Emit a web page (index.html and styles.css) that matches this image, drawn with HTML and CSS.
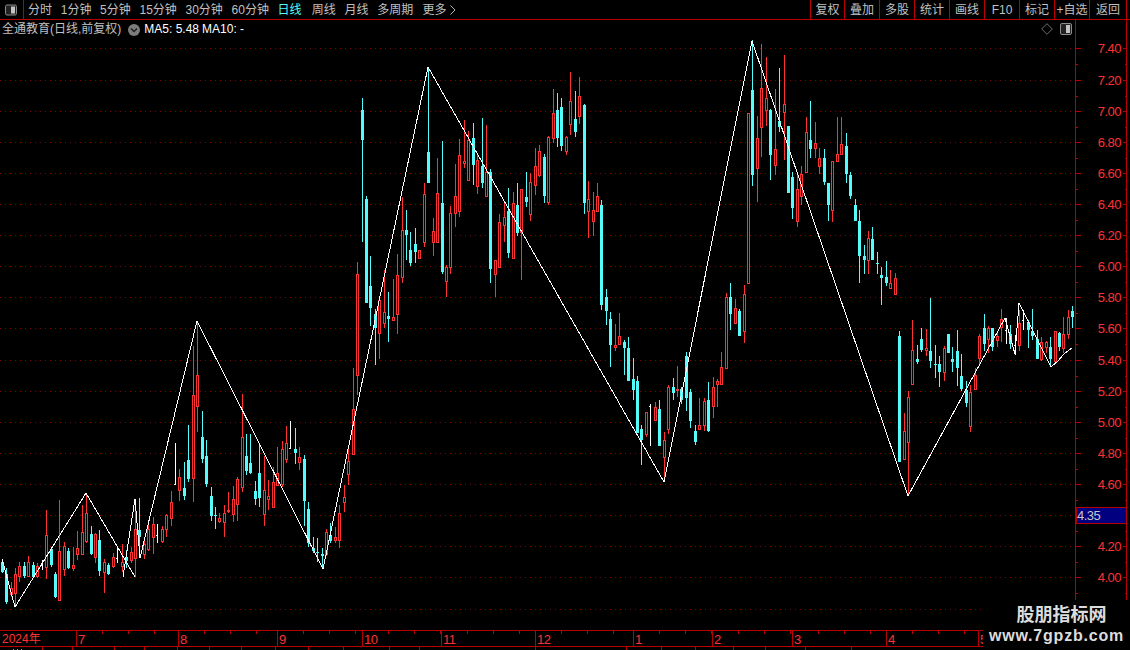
FILE: index.html
```html
<!DOCTYPE html>
<html lang="zh-CN">
<head>
<meta charset="utf-8">
<title>全通教育 日线</title>
<link rel="stylesheet" href="styles.css">
</head>
<body>
<div class="app">
  <header class="toolbar">
    <div class="layout-cell">
      <svg class="icon-12" viewBox="0 0 12 12"><rect x="0.5" y="1" width="11" height="10" rx="1.5" fill="#222" stroke="#8c8c8c"/><rect x="6" y="2.5" width="4" height="7" fill="#c4c4c4"/></svg>
    </div>
    <nav class="tabs">
      <span>分时</span><span>1分钟</span><span>5分钟</span><span>15分钟</span><span>30分钟</span><span>60分钟</span>
      <span class="active">日线</span><span>周线</span><span>月线</span><span>多周期</span>
      <span class="more">更多<svg class="chev" viewBox="0 0 6 10"><path d="M0.5 0.5 L5 5 L0.5 9.5" fill="none" stroke="#b4b4b4"/></svg></span>
    </nav>
    <div class="actions">
      <span>复权</span><span>叠加</span><span>多股</span><span>统计</span><span>画线</span><span>F10</span><span>标记</span><span>+自选</span><span>返回</span>
    </div>
  </header>

  <main class="chart">
    <svg id="plot" class="plot" viewBox="0 20 1130 610" width="1130" height="610"></svg>
    <div class="legend">
      <div class="legend-info">
        <span class="stock">全通教育(日线,前复权)</span>
        <svg class="dropdown" viewBox="0 0 12 12"><circle cx="6" cy="6" r="6" fill="#7c7c7c"/><path d="M3 4.5 L6 7.5 L9 4.5" fill="none" stroke="#1c1c1c" stroke-width="1.4"/></svg>
        <span class="ma">MA5: 5.48</span>
        <span class="ma">MA10: -</span>
      </div>
      <div class="legend-tools">
        <svg class="icon-12" viewBox="0 0 12 12"><path d="M6 0.7 L11.3 6 L6 11.3 L0.7 6 Z" fill="none" stroke="#6e6e6e"/></svg>
        <svg class="icon-12" viewBox="0 0 12 12"><rect x="0.5" y="0.5" width="11" height="11" rx="1.5" fill="#222" stroke="#8c8c8c"/><rect x="6" y="2" width="4" height="8" fill="#c4c4c4"/></svg>
      </div>
    </div>
  </main>

  <div class="dates">
    <span>2024年</span><span>7</span><span>8</span><span>9</span><span>10</span><span>11</span><span>12</span><span>1</span><span>2</span><span>3</span><span>4</span><span>5</span>
  </div>
  <div class="strip">
    <i class="first"></i><i></i><i></i><i></i><i></i><i></i><i></i><i></i><i></i><i></i><i></i><i></i><i></i><i></i><i></i><i></i><i></i><i></i><i></i><i></i><i></i>
  </div>

  <aside class="watermark">
    <div class="wm-title">股朋指标网</div>
    <div class="wm-url">www.7gpzb.com</div>
  </aside>
</div>
<script src="chart.js"></script>
</body>
</html>
```
FILE: styles.css
```css
* { box-sizing: border-box; }
html, body { margin: 0; padding: 0; background: #000; }
body {
  width: 1130px;
  height: 650px;
  overflow: hidden;
  font: 12px/1 "Liberation Sans", "Noto Sans CJK SC", sans-serif;
  color: #c0c0c0;
}
.app { position: relative; display: flex; flex-direction: column; width: 1130px; height: 650px; overflow: hidden; }

.toolbar { display: flex; align-items: stretch; flex: 0 0 20px; height: 20px; border-bottom: 1px solid #b80000; }
.layout-cell { display: flex; align-items: center; justify-content: center; width: 24px; padding-right: 1px; border-right: 1px solid #b80000; }
.icon-12 { display: block; width: 12px; height: 12px; }
.tabs { display: flex; align-items: center; gap: 8.7px; padding-left: 4px; }
.tabs span { display: block; white-space: nowrap; }
.tabs .active { color: #54fcfc; margin-right: 1.5px; }
.tabs .more { display: flex; align-items: center; gap: 4px; margin-left: 0.5px; }
.chev { display: block; width: 6px; height: 10px; }
.actions { display: flex; margin-left: auto; padding-right: 3px; }
.actions span { display: flex; align-items: center; justify-content: center; width: 35px; border-left: 1px solid #b80000; white-space: nowrap; }
.actions span:first-child { width: 34px; }
.actions span:last-child { width: 38px; border-right: 1px solid #b80000; }

.chart { position: relative; flex: 0 0 610px; height: 610px; }
.plot { display: block; }
.plot text { font: 13px "Liberation Sans", sans-serif; letter-spacing: -0.5px; fill: #ff3232; }
.plot .tag { fill: #c8c8c8; }
.legend { position: absolute; left: 0; top: 0; width: 1075px; height: 18px; padding: 0 3px 0 2px; display: flex; align-items: center; justify-content: space-between; }
.legend-info { display: flex; align-items: center; }
.stock { white-space: nowrap; }
.dropdown { display: block; width: 12px; height: 12px; margin: 1px 4px 0 7px; }
.ma { color: #fff; margin-right: 3px; white-space: nowrap; }
.legend-tools { display: flex; gap: 7px; align-items: center; }

.dates {
  display: grid;
  grid-template-columns: 76px 102px 99px 85px 79px 94px 98px 79px 80px 94px 94px 1fr;
  flex: 0 0 17px;
  height: 17px;
  border-top: 1px solid #b80000;
  border-bottom: 1px solid #b80000;
  color: #ff3232;
  font-size: 13px;
  letter-spacing: -0.5px;
}
.dates span {
  padding: 2px 0 0 1px;
  border-left: 1px solid #b80000;
  line-height: 13px;
  background: repeating-linear-gradient(90deg, transparent 0 25px, #b80000 25px 26px) top / 100% 3px no-repeat;
}
.dates span:first-child { border-left: 0; background: none; padding-left: 2px; font-size: 12px; letter-spacing: 0; }
.dates span:last-child { margin-left: -2px; }

.strip {
  display: grid;
  grid-template-columns: 43px 30px 42px 30px 33px 32px 32px 34px 33px 35px 46px 30px 116px 91px 35px 34px 38px 32px 40px 46px 1fr;
  flex: 0 0 3px;
  height: 3px;
  overflow: hidden;
}
.strip i { display: block; height: 3px; border-right: 1px solid #b80000; }
.strip .first { background: repeating-linear-gradient(90deg, transparent 0 3px, #9a9a9a 3px 4px) 10px 2px / 14px 1px no-repeat; }

.watermark { position: absolute; right: 0; bottom: 0; width: 147px; height: 50px; padding-top: 5px; background: #000; text-align: center; color: #dcdcdc; font-weight: bold; }
.wm-title { font-size: 18px; line-height: 20px; padding-left: 10px; }
.wm-url { margin-top: 1px; font-size: 16px; line-height: 20px; letter-spacing: 0.8px; white-space: nowrap; }
```
FILE: chart.js
```js
// Candles: [high, low, bodyTop, bodyBottom, kind]  r = rising (hollow red), c = falling (cyan), w = flat (white)
// The first group was read in 3x units from y = 320.
var early = [
[718,760,726,755,'c'],[745,851,762,846,'c'],[785,830,805,825,'r'],[745,860,763,823,'r'],[725,785,737,772,'r'],[727,775,738,768,'c'],[708,770,727,770,'r'],[725,772,735,770,'c'],[730,775,738,772,'r'],[720,750,735,735,'w'],
[570,776,645,745,'r'],[680,740,687,735,'c'],[757,835,762,830,'c'],[540,842,694,842,'r'],[667,767,679,749,'r'],[683,745,693,743,'c'],[680,752,736,747,'r'],[633,720,685,704,'r'],[555,705,637,704,'r'],[520,670,580,666,'r'],
[618,705,642,702,'c'],[640,728,642,713,'r'],[630,767,660,752,'c'],[718,818,727,758,'r'],[730,765,735,762,'c'],[700,742,712,740,'r'],[682,730,715,715,'w'],[672,755,725,740,'r'],[690,745,712,722,'c'],[680,728,697,722,'r'],
[565,770,628,716,'r'],[533,710,630,652,'c'],[655,717,673,705,'r'],[600,693,628,690,'r'],[590,703,613,653,'r'],[613,668,645,645,'w'],[617,667,627,666,'r'],[583,650,586,631,'r'],[513,617,547,596,'r'],[370,495,493,493,'w'],
[447,543,472,512,'r'],[427,540,505,527,'c'],[316,485,420,477,'c'],[78,545,226,478,'r'],[3,335,166,262,'r'],[273,428,351,417,'c'],[360,500,408,492,'c'],[502,602,528,587,'c'],[560,626,586,587,'c'],[580,610,595,605,'r'],
[556,650,580,610,'r'],[517,578,571,577,'r'],[497,607,538,586,'r'],[472,603,478,554,'r'],[222,516,351,505,'r'],[342,465,408,452,'c'],[343,462,430,458,'c'],[484,556,514,536,'c'],[375,560,460,533,'c'],[407,617,511,586,'r'],
[480,570,529,539,'r'],[440,563,487,563,'r'],[381,497,460,497,'r'],[363,500,388,495,'r'],[318,430,370,420,'r'],[303,387,385,385,'w'],[325,433,388,399,'c'],[381,450,412,428,'r'],[405,618,418,543,'c'],[545,680,568,670,'c'],
[650,700,684,692,'c'],[655,725,697,700,'c'],[685,745,703,708,'c'],[627,708,637,705,'r'],[610,670,645,664,'c'],[620,668,652,662,'r'],[555,683,580,662,'r'],[495,575,530,548,'r'],[380,495,422,465,'r']
].map(function (c) { return [320 + c[0] / 3, 320 + c[1] / 3, 320 + c[2] / 3, 320 + c[3] / 3, c[4]]; });

var later = [
[368,455,409,455,'r'],[262,395,274,376,'r'],[98,242,110,140,'c'],[196,303,199,303,'c'],[256,326,286,308,'c'],[309,365,314,328,'c'],[300,359,300,334,'r'],[270,328,312,324,'r'],[292,342,316,319,'c'],[279,321,317,321,'r'],
[254,334,275,315,'r'],[197,283,230,278,'r'],[210,260,230,235,'c'],[232,266,250,263,'c'],[228,263,244,252,'c'],[250,259,250,259,'r'],[183,247,194,243,'r'],[67,183,152,183,'c'],[218,256,231,243,'r'],[158,243,193,243,'r'],
[141,274,203,272,'c'],[265,297,267,282,'r'],[206,274,213,268,'r'],[164,227,196,214,'r'],[139,217,155,212,'r'],[120,168,161,164,'r'],[131,181,140,181,'r'],[123,185,138,165,'c'],[155,194,160,187,'r'],[118,188,166,183,'c'],
[125,197,172,197,'r'],[169,283,172,269,'c'],[260,297,260,275,'r'],[214,268,222,268,'r'],[203,242,217,226,'r'],[188,258,211,253,'c'],[192,259,203,259,'r'],[183,236,205,233,'c'],[189,280,189,233,'r'],[172,207,197,202,'c'],
[173,221,182,215,'r'],[148,195,166,186,'r'],[145,177,151,176,'r'],[154,203,157,196,'c'],[136,205,137,203,'r'],[89,143,113,139,'r'],[93,147,110,138,'c'],[98,151,107,146,'c'],[136,155,137,152,'r'],[72,135,101,125,'r'],
[91,137,119,132,'c'],[77,124,96,117,'r'],[104,214,105,203,'c'],[181,238,199,212,'r'],[192,236,210,222,'r'],[183,212,196,212,'r'],[200,310,205,305,'c'],[289,325,297,311,'c'],[312,367,319,345,'c'],[324,351,345,348,'r'],
[313,345,336,345,'r'],[340,375,342,348,'c'],[337,381,348,381,'c'],[358,400,379,390,'c'],[376,433,381,433,'c'],[425,465,429,440,'c'],[412,437,412,435,'r'],[404,446,406,406,'w'],[402,421,407,421,'r'],[400,446,409,446,'c'],
[432,480,440,458,'r'],[385,434,387,430,'r'],[378,400,387,393,'c'],[366,397,389,391,'r'],[387,404,389,400,'c'],[352,411,356,398,'c'],[389,428,392,421,'c'],[425,445,431,442,'c'],[398,430,425,430,'r'],[398,431,401,426,'r'],
[382,432,400,431,'c'],[377,418,387,407,'r'],[379,407,381,385,'r'],[352,385,367,385,'r'],[293,369,297,369,'r'],[283,330,297,314,'c'],[299,324,308,324,'r'],[309,336,311,336,'c'],[285,343,294,332,'r'],[113,284,113,284,'r'],
[40,186,90,175,'c'],[116,202,138,169,'r'],[44,157,88,128,'r'],[57,126,98,111,'r'],[109,180,110,155,'c'],[89,175,149,166,'r'],[68,132,121,127,'c'],[55,160,104,113,'r'],[126,193,126,193,'c'],[172,219,177,208,'c'],
[175,227,189,222,'r'],[166,205,174,197,'r'],[117,173,132,173,'r'],[101,158,140,149,'c'],[122,158,143,149,'r'],[148,174,158,167,'r'],[149,185,158,182,'c'],[183,221,183,205,'c'],[161,222,161,211,'r'],[117,162,154,162,'r'],
[117,155,144,155,'r'],[133,183,146,174,'c'],[172,199,175,196,'c'],[199,221,205,221,'c'],[210,283,221,256,'c'],[245,274,256,260,'c'],[231,274,238,261,'r'],[227,260,239,260,'c'],[252,274,263,264,'c'],[267,305,275,278,'c'],
[261,286,277,283,'c'],[270,289,283,289,'r'],[273,295,278,295,'r'],[331,462,336,462,'c'],[413,460,431,460,'r'],[391,495,397,443,'r'],[320,385,350,385,'r'],[345,364,359,362,'c'],[328,352,339,350,'c'],[329,356,348,351,'r'],
[298,368,351,361,'c'],[345,378,364,365,'c'],[356,387,364,372,'c'],[346,381,348,373,'r'],[334,353,334,353,'c'],[347,372,359,362,'c'],[330,386,351,368,'c'],[354,391,376,389,'c'],[381,407,390,403,'c'],[385,432,392,427,'r'],
[368,390,375,390,'r'],[334,364,336,359,'r'],[314,351,328,344,'c'],[326,353,328,340,'r'],[328,351,328,347,'c'],[333,347,336,341,'r'],[309,342,319,328,'r'],[318,344,330,330,'w'],[325,349,334,344,'c'],[335,355,345,345,'w'],
[310,351,323,346,'r'],[310,330,320,320,'w'],[320,348,322,330,'c'],[309,340,331,336,'c'],[330,359,339,359,'c'],[337,361,342,360,'r'],[341,353,342,348,'r'],[337,367,347,359,'c'],[331,362,331,362,'r'],[332,351,333,347,'c'],
[317,353,334,349,'r'],[310,339,317,335,'r'],[306,328,311,317,'c']
];

var candles = early.concat(later);
var NS = 'http://www.w3.org/2000/svg';
var svg = document.getElementById('plot');
var RED = '#ff3232', CYAN = '#54fcfc', LINE = '#b80000';

function el(name, attrs, text) {
  var n = document.createElementNS(NS, name);
  for (var k in attrs) n.setAttribute(k, attrs[k]);
  if (text) n.textContent = text;
  svg.appendChild(n);
  return n;
}
function vline(x, y1, y2, color) {
  el('rect', { x: x, y: Math.round(y1), width: 1, height: Math.max(1, Math.round(y2) - Math.round(y1)), fill: color, 'shape-rendering': 'crispEdges' });
}

// Grid and price axis
var prices = ['7.40','7.20','7.00','6.80','6.60','6.40','6.20','6.00','5.80','5.60','5.40','5.20','5.00','4.80','4.60','','4.20','4.00'];
var ys = [];
for (var n = 0; n < 19; n++) ys.push(Math.round(48.4 + n * 31.12));
ys.forEach(function (y, i) {
  el('line', { x1: 0, x2: 1075, y1: y + 0.5, y2: y + 0.5, stroke: '#8a0000', 'stroke-dasharray': '1 4', 'shape-rendering': 'crispEdges' });
  el('rect', { x: 1075, y: y, width: 6, height: 1, fill: LINE, 'shape-rendering': 'crispEdges' });
  el('rect', { x: 1123, y: y, width: 4, height: 1, fill: LINE, 'shape-rendering': 'crispEdges' });
  el('rect', { x: 1075, y: y + 16, width: 3, height: 1, fill: LINE, 'shape-rendering': 'crispEdges' });
  el('rect', { x: 1125, y: y + 16, width: 2, height: 1, fill: LINE, 'shape-rendering': 'crispEdges' });
  if (prices[i]) el('text', { x: 1121, y: y + 4.5, 'text-anchor': 'end' }, prices[i]);
});
el('rect', { x: 1075, y: 20, width: 1, height: 610, fill: LINE, 'shape-rendering': 'crispEdges' });
el('rect', { x: 1126, y: 20, width: 1, height: 610, fill: LINE, 'shape-rendering': 'crispEdges' });

// Candles
candles.forEach(function (c, i) {
  var x = Math.floor(2.2 + i * 4.4426);
  var hi = c[0], lo = c[1], top = Math.round(c[2]), bot = Math.round(c[3]), k = c[4];
  var color = k === 'r' ? RED : k === 'c' ? CYAN : '#ffffff';
  if (k === 'w') {
    vline(x, hi, lo, color);
    el('rect', { x: x - 1, y: top, width: 2, height: 1, fill: color, 'shape-rendering': 'crispEdges' });
    return;
  }
  if (hi < top) vline(x, hi, top, color);
  if (lo > bot) vline(x, bot, lo, color);
  if (k === 'c') {
    el('rect', { x: x - 1, y: top, width: 3, height: Math.max(1, bot - top), fill: color, 'shape-rendering': 'crispEdges' });
  } else {
    el('rect', { x: x - 0.5, y: top + 0.5, width: 2, height: Math.max(1, bot - top - 1), fill: '#000', stroke: color, 'shape-rendering': 'crispEdges', transform: 'translate(-0.5 0)' });
  }
});

// Zigzag indicator
[
  '2,559 15,607 86,493 135,577',
  '123,577 135,499 140,558 197,321 323,569 428,67 664,482 752,41 908,496 1005,318 1015,354 1019,303 1051,367 1058,361 1064,354 1072,348'
].forEach(function (pts) {
  el('polyline', { points: pts, fill: 'none', stroke: '#ffffff', 'stroke-width': 1, 'shape-rendering': 'crispEdges' });
});

// Current price marker
el('rect', { x: 1076, y: 507, width: 50, height: 16, fill: '#000080', stroke: LINE, 'shape-rendering': 'crispEdges' });
el('text', { x: 1077, y: 520, 'class': 'tag' }, '4.35');
```
